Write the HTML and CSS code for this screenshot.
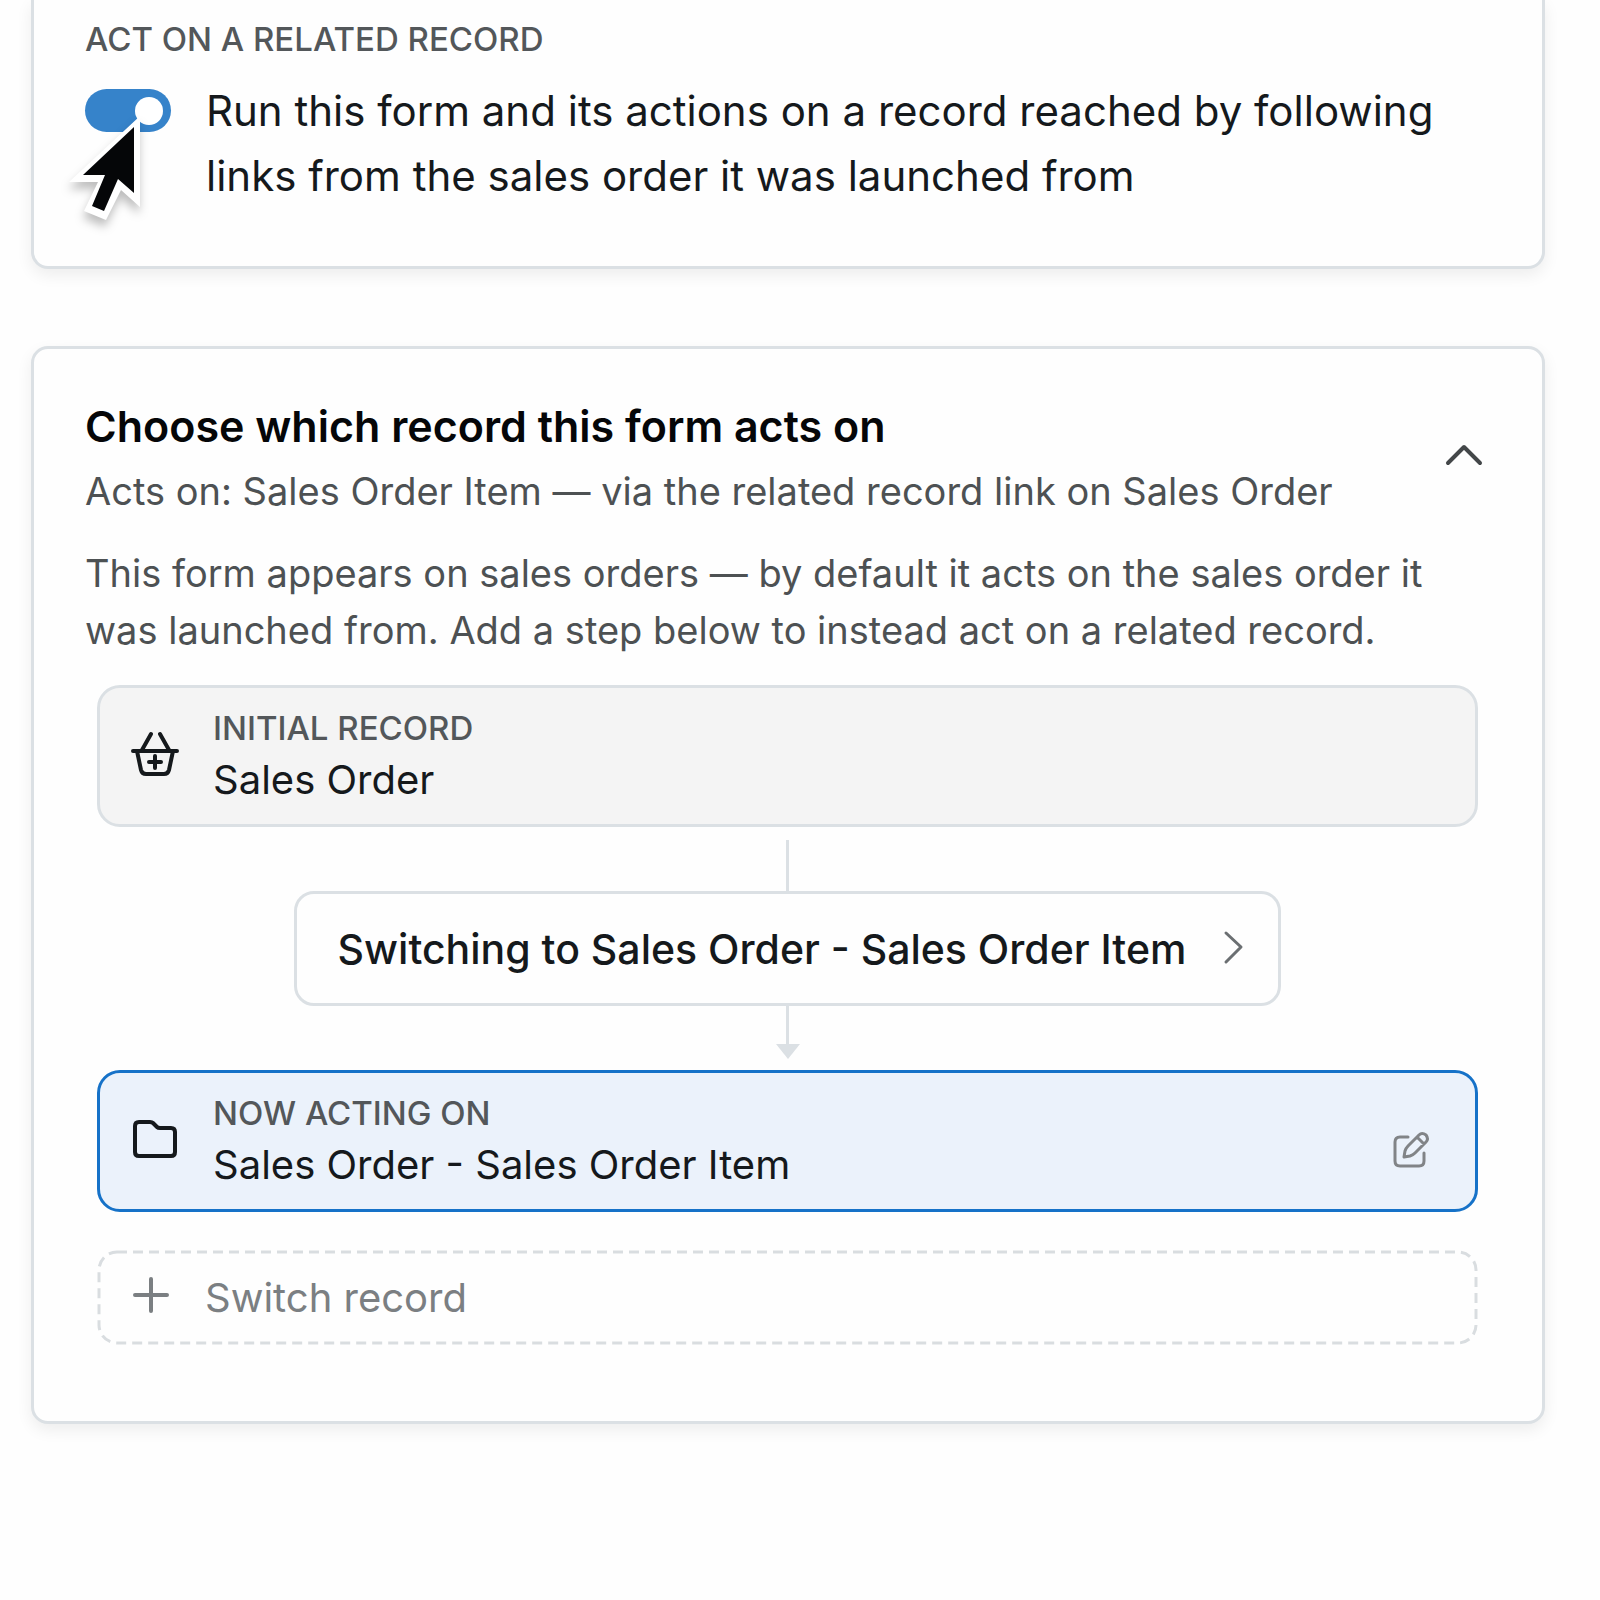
FILE: index.html
```html
<!DOCTYPE html>
<html lang="en">
<head>
<meta charset="utf-8">
<meta name="viewport" content="width=device-width, initial-scale=1">
<title>Form settings</title>
<link rel="stylesheet" href="styles.css">
</head>
<body>
<main class="page">
  <section class="card card-continued">
    <h2 class="eyebrow" id="related-title">ACT ON A RELATED RECORD</h2>
    <div class="switch-row">
      <span class="switch">
        <input class="switch-input" type="checkbox" role="switch" id="related" checked>
        <svg class="cursor" viewBox="0 0 90 125" aria-hidden="true">
          <path fill="#fff" d="M76 9V100L57 83L42 113L20 104L34 75H5Z"/>
          <path fill="#050608" d="M70 20V86L54 72L40 104L28 99L41 68H19Z"/>
        </svg>
      </span>
      <label class="switch-label" for="related">Run this form and its actions on a record reached by following links from the sales order it was launched from</label>
    </div>
  </section>

  <section class="card">
    <header class="card-head">
      <div class="card-titles">
        <h2 class="title">Choose which record this form acts on</h2>
        <p class="text">Acts on: Sales Order Item — via the related record link on Sales Order</p>
      </div>
      <button class="icon-button" type="button" aria-label="Collapse" aria-expanded="true">
        <svg width="40" height="40" viewBox="-1 2 40 40" fill="none" stroke="#434749" stroke-width="4" stroke-linecap="round" stroke-linejoin="round"><path d="M4 28L20 12L36 28"/></svg>
      </button>
    </header>
    <p class="text intro">This form appears on sales orders — by default it acts on the sales order it was launched from. Add a step below to instead act on a related record.</p>

    <div class="flow">
      <div class="record">
        <svg class="record-icon" width="52" height="52" viewBox="-1 3 52 52" fill="none" stroke="#15191c" stroke-width="4" stroke-linecap="round" stroke-linejoin="round">
          <path d="M4 24H48M22 7L13 23M31 7L40 23M8 24L12 43Q13 47 17 47H35Q39 47 40 43L44 24M26 29V41M20 35H32"/>
        </svg>
        <div class="record-body">
          <span class="eyebrow">INITIAL RECORD</span>
          <span class="record-name">Sales Order</span>
        </div>
      </div>

      <div class="connector">
        <span class="line"></span>
        <button class="step" type="button">
          <span>Switching to Sales Order - Sales Order Item</span>
          <svg width="24" height="36" viewBox="0 0 24 36" fill="none" stroke="#6b6f72" stroke-width="3" stroke-linecap="round" stroke-linejoin="round"><path d="M5 2L20 16L5 31"/></svg>
        </button>
        <span class="line line-short"></span>
        <svg class="arrow" width="24" height="15" viewBox="0 0 24 15"><path fill="#dbe0e4" d="M0 0H24L12 15Z"/></svg>
      </div>

      <div class="record record-active">
        <svg class="record-icon" width="52" height="52" viewBox="0 2 52 52" fill="none" stroke="#15191c" stroke-width="4" stroke-linecap="round" stroke-linejoin="round">
          <path d="M11 9H22Q24 9 25 10L29 14Q30 15 32 15H43Q47 15 47 19V39Q47 43 43 43H11Q7 43 7 39V13Q7 9 11 9Z"/>
        </svg>
        <div class="record-body">
          <span class="eyebrow">NOW ACTING ON</span>
          <span class="record-name">Sales Order - Sales Order Item</span>
        </div>
        <button class="icon-button" type="button" aria-label="Edit step">
          <svg width="40" height="56" viewBox="-1 -16 40 56" fill="none" stroke="#818487" stroke-width="3" stroke-linecap="round" stroke-linejoin="round">
            <path d="M17 8H9Q4 8 4 13V32Q4 37 9 37H28Q33 37 33 32V24M13 28L14 22Q15 19 17 17L28 6Q31 3 35 6Q38 10 35 13L24 24Q22 26 19 27L13 28ZM26 8L33 15"/>
          </svg>
        </button>
      </div>

      <button class="add" type="button">
        <svg class="add-outline" aria-hidden="true"><rect class="add-rect" rx="18"/></svg>
        <svg width="36" height="36" viewBox="0 3 36 36" fill="none" stroke="#7b7f82" stroke-width="4" stroke-linecap="round"><path d="M18 2V34M2 18H34"/></svg>
        <span>Switch record</span>
      </button>
    </div>
  </section>
</main>
</body>
</html>
```
FILE: styles.css
```css
* { box-sizing: border-box; }

body {
  margin: 0;
  background: #fefefe;
  color: #15191c;
  font-family: Inter, "Liberation Sans", sans-serif;
}

h2, p { margin: 0; }

button {
  font: inherit;
  color: inherit;
  background: none;
  border: 0;
  padding: 0;
  cursor: pointer;
}

svg { display: block; flex: none; overflow: visible; }

.page {
  display: flex;
  flex-direction: column;
  gap: 77px;
  padding: 0 55px 60px 31px;
}

.card {
  padding: 45px 52px 76px 51px;
  background: #fefefe;
  border: 3px solid #dbe0e4;
  border-radius: 17px;
  box-shadow: 0 6px 16px rgba(0, 0, 0, 0.07);
}

.card-continued {
  padding-top: 19px;
  padding-bottom: 58px;
  border-top: 0;
  border-radius: 0 0 17px 17px;
}

.eyebrow {
  display: block;
  font-size: 33px;
  line-height: 40px;
  font-weight: 500;
  color: #53575a;
}

.switch-row {
  display: flex;
  gap: 35px;
  margin-top: 19px;
}

.switch {
  position: relative;
  flex: none;
  padding-top: 11px;
}

.switch-input {
  appearance: none;
  display: flex;
  justify-content: flex-end;
  align-items: center;
  width: 86px;
  height: 43px;
  margin: 0;
  padding: 0 8px;
  border-radius: 22px;
  background: #3683ca;
}

.switch-input::before {
  content: "";
  width: 28px;
  height: 28px;
  border-radius: 50%;
  background: #fff;
}

/* pointer resting on the switch */
.cursor {
  position: absolute;
  left: -21px;
  top: 29px;
  width: 90px;
  height: 125px;
  filter: drop-shadow(-1px 7px 5px rgba(0, 0, 0, 0.25));
  pointer-events: none;
}

.switch-label {
  font-size: 42px;
  line-height: 65px;
}

.card-head {
  display: flex;
  align-items: center;
  justify-content: space-between;
}

.title {
  margin-bottom: 5px;
  font-size: 43px;
  line-height: 64px;
  font-weight: 600;
  color: #050608;
}

.text {
  font-size: 38px;
  line-height: 57px;
  color: #4d5153;
}

.intro { margin-top: 25px; }

.icon-button { flex: none; padding: 0 7px; }

.flow { margin: 26px 12px 0; }

.record {
  display: flex;
  align-items: center;
  gap: 33px;
  padding: 12px 38px 12px 28px;
  border: 3px solid #dbe0e4;
  border-radius: 23px;
  background: #f4f4f4;
}

.record-active {
  border-color: #1672c8;
  background: #ebf2fb;
}

.record-body { flex: 1; padding-top: 8px; }

.record-name {
  display: block;
  font-size: 40px;
  line-height: 64px;
}

.connector {
  display: flex;
  flex-direction: column;
  align-items: center;
  padding: 13px 0 11px;
}

.line {
  width: 3px;
  height: 51px;
  background: #dbe0e4;
}

.line-short { height: 38px; }

.step {
  display: flex;
  align-items: center;
  gap: 35px;
  padding: 26px 33px 25px 41px;
  border: 3px solid #dbe0e4;
  border-radius: 20px;
  font-size: 41px;
  line-height: 58px;
  font-weight: 500;
}

.add {
  position: relative;
  display: flex;
  align-items: center;
  gap: 36px;
  width: 100%;
  margin-top: 38px;
  padding: 16px 36px 15px;
  font-size: 40px;
  line-height: 64px;
  color: #7b7f82;
}

.add-outline {
  position: absolute;
  inset: 0;
  width: 100%;
  height: 100%;
}

.add-rect {
  x: 2px;
  y: 2px;
  width: calc(100% - 4px);
  height: calc(100% - 4px);
  fill: none;
  stroke: #d9dde0;
  stroke-width: 3px;
  stroke-dasharray: 10 6;
}
```
